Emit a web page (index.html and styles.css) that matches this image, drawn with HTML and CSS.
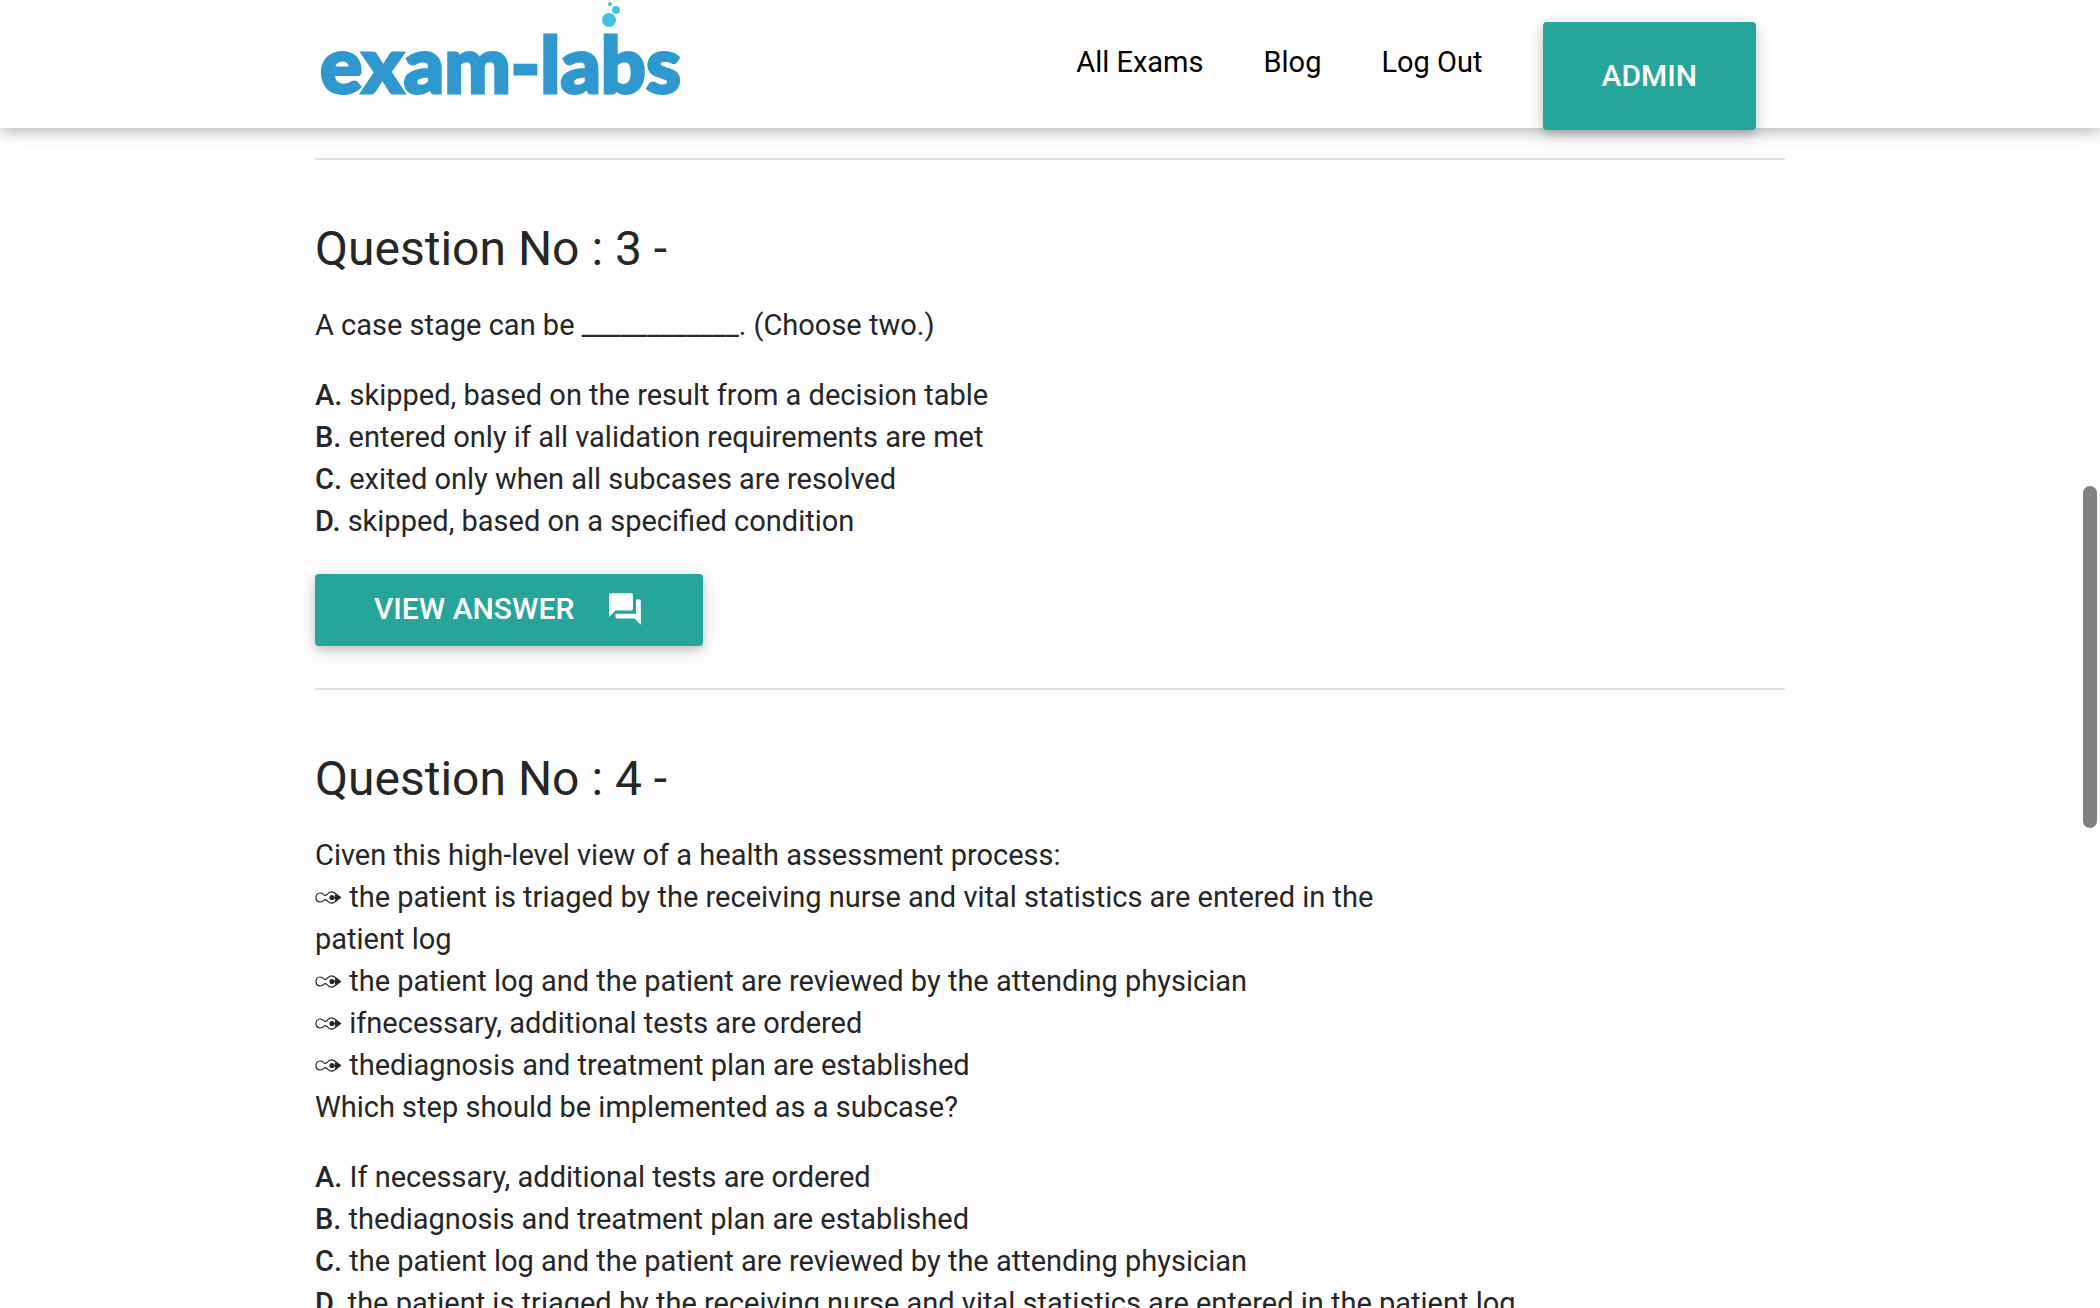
FILE: index.html
```html
<!DOCTYPE html>
<html lang="en">
<head>
    <meta charset="UTF-8">
    <meta name="viewport" content="width=device-width, initial-scale=1.0">
    <title>Exam-Labs</title>
    <link rel="stylesheet" href="styles.css">
</head>
<body>
    <svg class="sprite" aria-hidden="true">
        <symbol id="nib" viewBox="0 0 27 16">
            <path class="nib-outline" d="M9 9c-1 1.500-2 2-4 2-2.500 0-4-2-4-4.500S2.500 2 5 2c2 0 3 .5 4 2 1 .5 2 .5 3-.5C13.500 1.500 15 .8 16.500.8c3 0 5 3 9 5.700-4 2.700-6 5.700-9 5.700-1.500 0-3-.7-4.500-2.700-1-1-2-1-3-.5"/>
            <circle cx="17" cy="6.500" r="2.600"/>
            <path d="M17 6h3V3l5.800 3.500-5.800 3.500V7h-3z"/>
        </symbol>
    </svg>

    <header class="navbar">
        <div class="container nav-wrapper">
            <a href="#" class="logo" aria-label="exam-labs">
                <svg width="370" height="110" viewBox="0 0 370 110">
                    <text class="logo-text" x="5" y="93">exam-labs</text>
                    <circle class="bubble" cx="294" cy="20" r="7"/>
                    <circle class="bubble" cx="301" cy="10" r="4"/>
                    <circle class="bubble" cx="295" cy="4" r="2"/>
                </svg>
            </a>
            <nav class="nav-links">
                <a href="#">All Exams</a>
                <a href="#">Blog</a>
                <a href="#">Log Out</a>
                <a href="#" class="btn btn-admin">Admin</a>
            </nav>
        </div>
    </header>

    <main class="container">
        <section class="question">
            <h2>Question No : 3 -</h2>
            <p>A case stage can be ____________. (Choose two.)</p>
            <p>
                <b>A.</b> skipped, based on the result from a decision table<br>
                <b>B.</b> entered only if all validation requirements are met<br>
                <b>C.</b> exited only when all subcases are resolved<br>
                <b>D.</b> skipped, based on a specified condition
            </p>
            <button type="button" class="btn">
                View Answer
                <svg class="icon" viewBox="0 0 24 24" aria-hidden="true">
                    <path d="M21 6h-2v9H6v2c0 .55.45 1 1 1h11l4 4V7c0-.55-.45-1-1-1zm-4 6V3c0-.55-.45-1-1-1H3c-.55 0-1 .45-1 1v14l4-4h10c.55 0 1-.45 1-1z"/>
                </svg>
            </button>
        </section>

        <section class="question">
            <h2>Question No : 4 -</h2>
            <p>
                Civen this high-level view of a health assessment process:<br>
                <svg class="nib"><use href="#nib"/></svg> the patient is triaged by the receiving nurse and vital statistics are entered in the<br>
                patient log<br>
                <svg class="nib"><use href="#nib"/></svg> the patient log and the patient are reviewed by the attending physician<br>
                <svg class="nib"><use href="#nib"/></svg> ifnecessary, additional tests are ordered<br>
                <svg class="nib"><use href="#nib"/></svg> thediagnosis and treatment plan are established<br>
                Which step should be implemented as a subcase?
            </p>
            <p>
                <b>A.</b> If necessary, additional tests are ordered<br>
                <b>B.</b> thediagnosis and treatment plan are established<br>
                <b>C.</b> the patient log and the patient are reviewed by the attending physician<br>
                <b>D.</b> the patient is triaged by the receiving nurse and vital statistics are entered in the patient log
            </p>
        </section>
    </main>

    <div class="scroll-thumb"></div>
</body>
</html>
```

FILE: styles.css
```css
* {
    box-sizing: border-box;
}
body {
    margin: 0;
    height: 100vh;
    overflow: hidden;
    background-color: #fefefe;
    color: #262626;
    font-family: Roboto, sans-serif;
    font-size: 29px;
    line-height: 42px;
}
.sprite {
    display: none;
}
.container {
    width: 70%;
    margin: 0 auto;
}
.navbar {
    position: relative;
    height: 128px;
    background-color: #fefefe;
    box-shadow: 0 4px 10px 0 rgba(0,0,0,0.16), 0 4px 20px 0 rgba(0,0,0,0.12);
}
.nav-wrapper {
    display: flex;
    justify-content: space-between;
    align-items: flex-start;
}
.logo svg {
    display: block;
}
.logo-text {
    font-family: Lato, sans-serif;
    font-weight: 900;
    font-size: 79px;
    fill: #2e98cf;
    stroke: #2e98cf;
    stroke-width: 3px;
}
.bubble {
    fill: #43c3e3;
}
.nav-links {
    display: flex;
    align-items: flex-start;
    gap: 60px;
    padding: 22px 29px 0 0;
}
.nav-links a {
    color: #000;
    text-decoration: none;
    padding-top: 19px;
}
.btn,
.nav-links .btn {
    display: flex;
    align-items: center;
    gap: 32px;
    height: 72px;
    padding: 0 59px;
    border: none;
    border-radius: 4px;
    background-color: #26a69a;
    box-shadow: 0 4px 10px 0 rgba(0,0,0,0.16), 0 4px 20px 0 rgba(0,0,0,0.12);
    color: #fff;
    font-family: inherit;
    font-size: 30px;
    font-weight: 500;
    line-height: 68px;
    text-transform: uppercase;
    cursor: pointer;
}
.nav-links .btn-admin {
    height: 108px;
}
.icon {
    width: 38px;
    height: 38px;
    fill: #fff;
}
.question {
    padding: 62px 0 42px;
    border-top: 2px solid #e0e0e0;
}
.question:first-child {
    margin-top: 30px;
}
.question .btn {
    margin-top: 32px;
    padding-bottom: 3px;
}
h2 {
    margin: 0 0 29px;
    font-size: 48px;
    font-weight: 400;
    line-height: 53px;
}
p {
    margin: 0 0 28px;
}
p:last-of-type {
    margin-bottom: 0;
}
b {
    font-weight: 500;
}
.nib {
    width: 27px;
    height: 16px;
    fill: #262626;
}
.nib-outline {
    fill: none;
    stroke: #262626;
    stroke-width: 1.2px;
}
.scroll-thumb {
    position: absolute;
    top: 486px;
    right: 3px;
    width: 14px;
    height: 342px;
    border-radius: 7px;
    background-color: #808080;
}
```
